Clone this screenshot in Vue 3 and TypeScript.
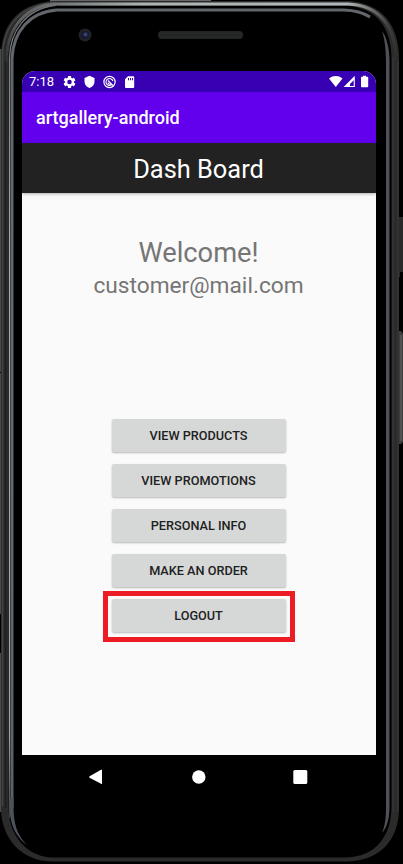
<script setup lang="ts">
interface Action {
  label: string
  marked?: boolean
}

const actions: Action[] = [
  { label: 'View products' },
  { label: 'View promotions' },
  { label: 'Personal info' },
  { label: 'Make an order' },
  { label: 'Logout', marked: true },
]
</script>

<template>
  <div class="device">
    <svg class="frame" viewBox="0 0 403 864" width="403" height="864" fill="none" aria-hidden="true">
      <defs>
        <linearGradient id="rimTop" x1="0" y1="0" x2="403" y2="0" gradientUnits="userSpaceOnUse">
          <stop offset="0" stop-color="#55585b" />
          <stop offset=".12" stop-color="#6b6e70" />
          <stop offset=".35" stop-color="#aeb2b3" />
          <stop offset=".86" stop-color="#b4b8ba" />
          <stop offset=".96" stop-color="#444" />
          <stop offset="1" stop-color="#333" />
        </linearGradient>
        <linearGradient id="rimFade" x1="0" y1="0" x2="0" y2="70" gradientUnits="userSpaceOnUse">
          <stop offset="0" stop-color="#fff" />
          <stop offset=".3" stop-color="#fff" />
          <stop offset="1" stop-color="#000" />
        </linearGradient>
        <mask id="rimMask" maskUnits="userSpaceOnUse" x="0" y="0" width="403" height="80">
          <rect width="403" height="80" fill="url(#rimFade)" />
        </mask>
        <linearGradient id="bezel" x1="0" y1="0" x2="0" y2="864" gradientUnits="userSpaceOnUse">
          <stop offset="0" stop-color="#62656c" />
          <stop offset=".5" stop-color="#626976" />
          <stop offset=".93" stop-color="#5b606b" />
          <stop offset="1" stop-color="#25272b" />
        </linearGradient>
        <linearGradient id="edge" x1="0" y1="0" x2="0" y2="864" gradientUnits="userSpaceOnUse">
          <stop offset="0" stop-color="#707274" />
          <stop offset=".08" stop-color="#7d8082" />
          <stop offset=".3" stop-color="#a9acb0" />
          <stop offset=".85" stop-color="#a0a3a7" />
          <stop offset=".95" stop-color="#34363a" />
        </linearGradient>
      </defs>
      <path d="M0 49h2v323H0zM0 373h2v241H0zM0 653h2v159H0z" fill="#484848" />
      <path d="M50 0h161v2H50z" fill="#666" />
      <path d="M399 217h4v55h-3v5h-1z" fill="#292929" />
      <path d="M399 331h2l2 3v108l-2 2h-2z" fill="#3d3d3d" />
      <path d="M401 335v106" stroke="#666" />
      <path d="M55 1H348C382 3 399 25 399 59V808C399 840 380 861.500 345 861.500H53C21 861.500 1 838 1 808V55C2 22 20 3 55 1Z" fill="#2b2b2b" />
      <path d="M2.500 806V56C3 24 23 4 56 2.500" stroke="#434343" stroke-width="1.500" />
      <path d="M5.500 808V57C6 28 25 7 57 4" stroke="#1e1e1e" stroke-width="1.500" />
      <path d="M393 57V812M398 62V812" stroke="#3b3b3b" />
      <path d="M8.500 58C8.500 28 27 7 58 6H348C376 8 391.500 27 391.500 59V806C391.500 836 376 857 345 857.500H53C27 857.500 8.500 835 8.500 808Z" fill="#000" />
      <g mask="url(#rimMask)">
        <path d="M6 62C7 26 27 5 56 4H348C379 5 396 26 396 61" stroke="url(#rimTop)" stroke-width="3" />
      </g>
      <path d="M9.500 818V58C10 31 26 9 56 5" stroke="url(#edge)" stroke-width="1.300" />
      <path d="M12 808V59C13 31 30 12 57 10H344Q360 10.500 370 17" stroke="url(#bezel)" stroke-width="3" />
      <path d="M13.500 798V806C13.500 824 17 835 27 845C17 838 9.500 826 9.500 806V798Z" fill="#4d5159" />
      <path d="M382 31C386 36 389.500 47 389.500 61V807C389.500 820 386 829 382 833C385 826 386 818 386 807V62C386 47 384 37 382 31Z" fill="#505157" />
      <circle cx="85" cy="35" r="6.500" fill="#202225" />
      <circle cx="85" cy="35" r="4" fill="#171b2b" />
      <circle cx="85.500" cy="34.500" r="2" fill="#30417d" />
      <rect x="158" y="31" width="85" height="8" rx="3.500" fill="#232525" />
      <path d="M160 33.500H241M160 36.500H241" stroke="#303232" stroke-dasharray="1 1" />
    </svg>

    <main class="screen">
      <div class="status">
        <span class="clock">7:18</span>
        <svg class="notices" viewBox="0 0 74 14" width="74" height="14" aria-hidden="true">
          <g transform="translate(-1 -.5) scale(.625)" fill="#fff">
            <path d="M19.140 12.940c.04-.3.060-.61.060-.94 0-.32-.02-.64-.07-.94l2.030-1.580c.18-.14.230-.41.120-.61l-1.920-3.320c-.12-.22-.37-.29-.59-.22l-2.390.96c-.5-.38-1.030-.7-1.620-.94l-.36-2.540c-.04-.24-.24-.41-.48-.41h-3.840c-.24 0-.43.170-.47.410l-.36 2.540c-.59.240-1.130.570-1.620.940l-2.390-.96c-.22-.08-.47 0-.59.220L2.740 8.870c-.12.210-.08.470.120.610l2.030 1.580c-.05.300-.09.630-.09.940s.020.640.070.940l-2.030 1.580c-.18.140-.23.410-.12.610l1.920 3.320c.12.220.370.290.590.220l2.390-.96c.5.380 1.030.700 1.620.940l.36 2.540c.05.240.240.410.480.410h3.840c.24 0 .44-.17.470-.41l.36-2.540c.59-.24 1.130-.56 1.620-.94l2.390.96c.22.080.470 0 .59-.22l1.920-3.320c.12-.22.070-.47-.12-.61zM12 15.600a3.600 3.600 0 1 1 0-7.200 3.600 3.600 0 0 1 0 7.200z" />
          </g>
          <path d="M26.500.8 31.500 3V6.500C31.500 9.500 29.500 12 26.500 13C23.500 12 21.500 9.500 21.500 6.500V3Z" fill="#fff" />
          <circle cx="46.500" cy="7" r="5.600" fill="none" stroke="#fff" stroke-width="1.200" />
          <path d="M48.600 9.800A3.500 3.500 0 1 1 49.900 6.200M45 5.500 50.200 10.700M45.200 7.500A1.500 1.500 0 0 0 47.500 9" fill="none" stroke="#fff" stroke-width="1.100" />
          <path fill-rule="evenodd" d="M65 1.200H70.200Q71.200 1.200 71.200 2.200V12Q71.200 13 70.200 13H63Q62 13 62 12V4.200ZM65 3V5.200H66V3ZM67 3V5.200H68V3ZM69 3V5.200H70V3Z" fill="#fff" />
        </svg>
        <svg class="signals" viewBox="0 0 41 14" width="41" height="14" aria-hidden="true">
          <path d="M0 3.500C4 .2 9.500.2 13.500 3.500L6.750 12Z" fill="#fff" />
          <path fill-rule="evenodd" d="M25.800.8V12H14.600ZM24.700 5.200 21 8.900V10.900H24.700Z" fill="#fff" />
          <path d="M34 1.700V.7H37V1.700H38.500Q39.200 1.700 39.200 2.400V11.500Q39.200 12.300 38.500 12.300H32.700Q32 12.300 32 11.500V2.400Q32 1.700 32.700 1.700Z" fill="#fff" />
        </svg>
      </div>
      <header class="appbar">artgallery-android</header>
      <h1 class="title">Dash Board</h1>
      <section class="content">
        <p class="welcome">Welcome!</p>
        <p class="email">customer@mail.com</p>
        <div class="actions">
          <div v-for="action in actions" :key="action.label" class="slot" :class="{ marked: action.marked }">
            <button type="button" class="action">{{ action.label }}</button>
          </div>
        </div>
      </section>
    </main>
    <nav class="navbar">
      <svg viewBox="0 0 220 16" width="220" height="16" fill="#fff" aria-label="Navigation">
        <path d="M13 .8V15.200L.6 8.800Q-.3 8 .6 7.200L12 .8Z" />
        <circle cx="109.800" cy="8" r="6.700" />
        <rect x="204.300" y="1" width="14" height="14" rx="1.500" />
      </svg>
    </nav>
  </div>
</template>

<style>
body {
  margin: 0;
  background: #000;
}
</style>

<style scoped>
.device {
  position: relative;
  box-sizing: border-box;
  width: 403px;
  height: 864px;
  padding: 71px 27px 0 22px;
  overflow: hidden;
  background: #000;
  font-family: Roboto, sans-serif;
}
.frame {
  position: absolute;
  inset: 0;
}
.screen {
  position: relative;
  display: flex;
  flex-direction: column;
  height: 684px;
  overflow: hidden;
  border-radius: 13px 13px 0 0;
  background: #fafafa;
}
.status {
  display: flex;
  flex: none;
  align-items: center;
  box-sizing: border-box;
  height: 21px;
  padding: 0 6px 0 7px;
  background: #3700b3;
  color: #fff;
}
.clock {
  width: 34px;
  padding-top: 1px;
  font-size: 13px;
  line-height: 20px;
}
.signals {
  margin-left: auto;
}
.appbar {
  flex: none;
  box-sizing: border-box;
  height: 51px;
  padding-left: 14px;
  background: #6200ee;
  color: #fff;
  font-size: 18px;
  font-weight: 500;
  line-height: 52px;
}
.title {
  position: relative;
  flex: none;
  box-sizing: border-box;
  height: 50px;
  margin: 0;
  padding-right: 1px;
  background: #222;
  box-shadow: 0 1px 3px rgba(0, 0, 0, .3);
  color: #fff;
  font-size: 25.400px;
  font-weight: 400;
  line-height: 53px;
  text-align: center;
}
.content {
  display: flex;
  flex-direction: column;
  align-items: center;
  padding-top: 42px;
  color: #757575;
}
.welcome {
  margin: 0;
  padding-right: 1px;
  font-size: 27.300px;
  line-height: 36px;
}
.email {
  margin: 0;
  padding-right: 1px;
  font-size: 22.700px;
  line-height: 30px;
}
.actions {
  display: flex;
  flex-direction: column;
  align-items: center;
  margin-top: 111.600px;
}
.slot {
  box-sizing: border-box;
  height: 45.100px;
  padding: 6px 9px;
}
.marked {
  height: 51px;
  margin-top: -2px;
  padding: 3px 4px;
  border: 5px solid #ed1c24;
}
.action {
  display: block;
  box-sizing: border-box;
  width: 174px;
  height: 33.400px;
  padding: 1px 1px 0 0;
  border: 0;
  border-radius: 2px;
  background: #d6d8d7;
  box-shadow: 0 1px 2px rgba(0, 0, 0, .27);
  color: #212121;
  font: 500 12.700px/32px Roboto, sans-serif;
  text-align: center;
  text-transform: uppercase;
}
.navbar {
  position: relative;
  display: flex;
  justify-content: center;
  padding-top: 14px;
}
.navbar svg {
  margin-left: -1px;
}
</style>
